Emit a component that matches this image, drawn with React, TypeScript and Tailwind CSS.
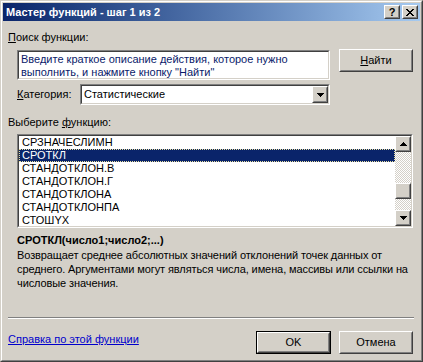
import React from 'react';

const font = "font-['Liberation_Sans',Arial,sans-serif]";

// classic raised 3d button frame
const Raised: React.FC<{ className?: string; children?: React.ReactNode }> = ({ className = '', children }) => (
  <div className={`border border-t-white border-l-white border-r-[#404040] border-b-[#404040] bg-[#d4d0c8] ${className}`}>
    <div className="w-full h-full border border-t-[#d4d0c8] border-l-[#d4d0c8] border-r-[#808080] border-b-[#808080] flex items-center justify-center">
      {children}
    </div>
  </div>
);

const Sunken: React.FC<{ className?: string; children?: React.ReactNode }> = ({ className = '', children }) => (
  <div className={`border border-t-[#808080] border-l-[#808080] border-r-white border-b-white ${className}`}>
    <div className="w-full h-full border border-t-[#404040] border-l-[#404040] border-r-[#d4d0c8] border-b-[#d4d0c8] bg-white flex">
      {children}
    </div>
  </div>
);

const ArrowDown = () => (
  <svg width="7" height="4" viewBox="0 0 7 4" shapeRendering="crispEdges">
    <path d="M0 0h7v1H0zM1 1h5v1H1zM2 2h3v1H2zM3 3h1v1H3z" fill="#000" />
  </svg>
);

const ArrowUp = () => (
  <svg width="7" height="4" viewBox="0 0 7 4" shapeRendering="crispEdges">
    <path d="M3 0h1v1H3zM2 1h3v1H2zM1 2h5v1H1zM0 3h7v1H0z" fill="#000" />
  </svg>
);

const items = ['СРЗНАЧЕСЛИМН', 'СРОТКЛ', 'СТАНДОТКЛОН.В', 'СТАНДОТКЛОН.Г', 'СТАНДОТКЛОНА', 'СТАНДОТКЛОНПА', 'СТОШYX'];

export default function App() {
  return (
    <div className={`w-[423px] h-[362px] border border-t-[#d4d0c8] border-l-[#d4d0c8] border-r-[#404040] border-b-[#404040] bg-[#d4d0c8] text-[11px] leading-[13px] text-black ${font}`}>
      <div className="w-full h-full border border-t-white border-l-white border-r-[#808080] border-b-[#808080] p-[1px] flex flex-col">
        {/* title bar */}
        <div className="h-[18px] shrink-0 flex items-center pl-[3px] pr-[2px] bg-linear-to-r from-[#0a246a] to-[#a6caf0]">
          <span className="text-white font-bold text-[11px] flex-1">Мастер функций - шаг 1 из 2</span>
          <div className="flex gap-[2px]">
            <Raised className="w-[16px] h-[14px]">
              <span className="font-bold text-[11px] leading-[10px] text-black">?</span>
            </Raised>
            <Raised className="w-[16px] h-[14px]">
              <svg width="8" height="7" viewBox="0 0 8 7" shapeRendering="crispEdges">
                <path d="M0 0h2v1H0zM6 0h2v1H6zM1 1h2v1H1zM5 1h2v1H5zM2 2h4v1H2zM3 3h2v1H3zM2 4h4v1H2zM1 5h2v1H1zM5 5h2v1H5zM0 6h2v1H0zM6 6h2v1H6z" fill="#000" />
              </svg>
            </Raised>
          </div>
        </div>

        {/* body */}
        <div className="flex flex-col pl-[5px]">
          <div className="mt-[10px]"><u>П</u>оиск функции:</div>

          <div className="mt-[5px] ml-[9px] flex items-start gap-[9px]">
            <Sunken className="w-[313px] h-[30px] mt-[1px]">
              <div className="px-[2px] pt-[1px] text-[#0a1a6a]">
                Введите краткое описание действия, которое нужно<br />выполнить, и нажмите кнопку "Найти"
              </div>
            </Sunken>
            <Raised className="w-[74px] h-[23px]">
              <span><u>Н</u>айти</span>
            </Raised>
          </div>

          <div className="mt-[4px] ml-[9px] flex items-center">
            <div className="w-[63px]"><u>К</u>атегория:</div>
            <Sunken className="w-[250px] h-[21px]">
              <div className="flex-1 flex items-center pl-[2px]">Статистические</div>
              <Raised className="w-[16px] h-[17px]">
                <ArrowDown />
              </Raised>
            </Sunken>
          </div>

          <div className="mt-[11px]">Выберите <u>ф</u>ункцию:</div>

          <Sunken className="mt-[5px] ml-[9px] w-[396px] h-[94px]">
            <div className="flex-1 overflow-hidden">
              {items.map((it) => (
                <div
                  key={it}
                  className={
                    it === 'СРОТКЛ'
                      ? 'h-[13px] leading-[11px] pl-[2px] bg-[#0a246a] text-white border border-dotted border-[#e8e0a0]'
                      : 'h-[13px] leading-[13px] pl-[3px]'
                  }
                >
                  {it}
                </div>
              ))}
            </div>
            <div className="w-[16px] flex flex-col bg-[repeating-conic-gradient(#d4d0c8_0_25%,#ffffff_0_50%)] bg-[length:2px_2px]">
              <Raised className="w-[16px] h-[16px]"><ArrowUp /></Raised>
              <div className="h-[31px]" />
              <Raised className="w-[16px] h-[16px]" />
              <div className="flex-1" />
              <Raised className="w-[16px] h-[16px]"><ArrowDown /></Raised>
            </div>
          </Sunken>

          <div className="mt-[6px] ml-[9px] font-bold">СРОТКЛ(число1;число2;...)</div>
          <div className="mt-[1px] ml-[9px] w-[403px] leading-[14px] tracking-[-0.1px]">
            Возвращает среднее абсолютных значений отклонений точек данных от среднего. Аргументами могут являться числа, имена, массивы или ссылки на числовые значения.
          </div>

          <div className="mt-[27px] w-[406px] border-t border-t-[#808080] border-b border-b-white" />

          <div className="mt-[12px] flex items-start">
            <a className="mt-[2px] text-[#0000cc] underline flex-1">Справка по этой функции</a>
            <div className="border border-black">
              <Raised className="w-[73px] h-[21px]">OK</Raised>
            </div>
            <Raised className="ml-[8px] mr-[7px] w-[74px] h-[23px]">Отмена</Raised>
          </div>
        </div>
      </div>
    </div>
  );
}
